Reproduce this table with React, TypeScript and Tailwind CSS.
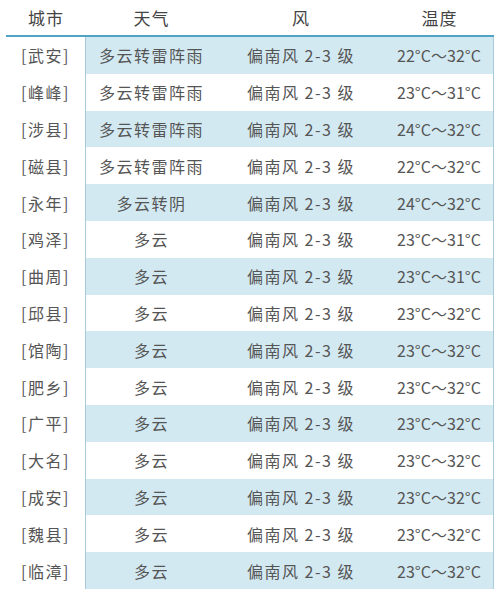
const ROWS = [
  { city: '武安', weather: '多云转雷阵雨', temp: '22°C～32°C' },
  { city: '峰峰', weather: '多云转雷阵雨', temp: '23°C～31°C' },
  { city: '涉县', weather: '多云转雷阵雨', temp: '24°C～32°C' },
  { city: '磁县', weather: '多云转雷阵雨', temp: '22°C～32°C' },
  { city: '永年', weather: '多云转阴', temp: '24°C～32°C' },
  { city: '鸡泽', weather: '多云', temp: '23°C～31°C' },
  { city: '曲周', weather: '多云', temp: '23°C～31°C' },
  { city: '邱县', weather: '多云', temp: '23°C～32°C' },
  { city: '馆陶', weather: '多云', temp: '23°C～32°C' },
  { city: '肥乡', weather: '多云', temp: '23°C～32°C' },
  { city: '广平', weather: '多云', temp: '23°C～32°C' },
  { city: '大名', weather: '多云', temp: '23°C～32°C' },
  { city: '成安', weather: '多云', temp: '23°C～32°C' },
  { city: '魏县', weather: '多云', temp: '23°C～32°C' },
  { city: '临漳', weather: '多云', temp: '23°C～32°C' },
];

const FONT = { fontFamily: '"Noto Sans CJK SC", "Noto Sans", sans-serif' };

export default function App() {
  return (
    <div className="w-[500px] h-[596px] bg-white pl-[6px] pr-[6px] text-[#555]" style={FONT}>
      <div className="grid grid-cols-[80px_131px_168px_109px] h-[37px] items-center text-[17px] tracking-[1px] text-[#444] border-b-2 border-[#4fa3c3]">
        <div className="text-center">城市</div>
        <div className="text-center">天气</div>
        <div className="text-center">风</div>
        <div className="text-center">温度</div>
      </div>
      {ROWS.map((r, i) => (
        <div
          key={r.city}
          className="grid grid-cols-[80px_131px_168px_109px] h-[36.8px] items-center text-[16px] tracking-[1.5px]"
        >
          <div className="h-full flex items-center justify-center bg-white border-r border-[#a9cbd9]">
            [{r.city}]
          </div>
          <div
            className={
              'col-span-3 h-full grid grid-cols-[131px_168px_108px] items-center border-r border-[#a9cbd9] ' +
              (i % 2 === 0 ? 'bg-[#d3e9f2]' : 'bg-white')
            }
          >
            <div className="text-center">{r.weather}</div>
            <div className="text-center">偏南风 2-3 级</div>
            <div className="text-center tracking-[0px]">{r.temp}</div>
          </div>
        </div>
      ))}
    </div>
  );
}
